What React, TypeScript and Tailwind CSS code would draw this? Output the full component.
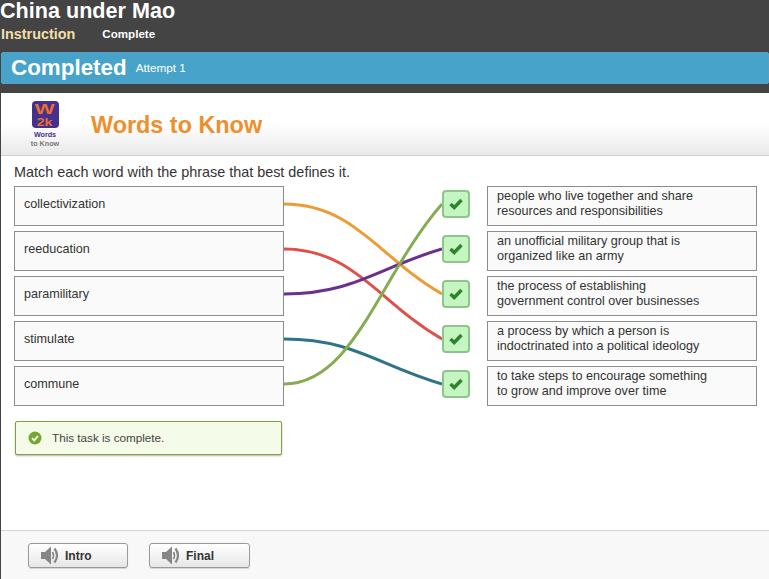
import React from "react";

const leftWords = ["collectivization", "reeducation", "paramilitary", "stimulate", "commune"];

const rightPhrases = [
  ["people who live together and share", "resources and responsibilities"],
  ["an unofficial military group that is", "organized like an army"],
  ["the process of establishing", "government control over businesses"],
  ["a process by which a person is", "indoctrinated into a political ideology"],
  ["to take steps to encourage something", "to grow and improve over time"],
];

// from/to are row indexes, left column to right column
const links = [
  { from: 0, to: 2, color: "#ee9a35" },
  { from: 1, to: 3, color: "#e0504a" },
  { from: 2, to: 1, color: "#6b2f91" },
  { from: 3, to: 4, color: "#2e7488" },
  { from: 4, to: 0, color: "#84ad52" },
];

const rowY = (i: number) => 18 + i * 45;

// flat where it leaves the word, still sloped where it reaches the check box
const linkPath = (from: number, to: number) => {
  const y0 = rowY(from);
  const y1 = rowY(to);
  return `M0 ${y0} C 70 ${y0}, 95 ${y0 + (y1 - y0) * 0.6}, 158 ${y1}`;
};

const Connectors = () => (
  <svg width="158" height="220" viewBox="0 0 158 220" fill="none" className="block shrink-0">
    {links.map((l) => (
      <path key={l.from} d={linkPath(l.from, l.to)} stroke={l.color} strokeWidth="3" />
    ))}
  </svg>
);

const CheckBox = () => (
  <div className="flex h-[28px] w-[28px] items-center justify-center rounded-[4px] border-2 border-[#8dc58d] bg-[#c5f5c0]">
    <svg width="14" height="12" viewBox="0 0 14 12" fill="none">
      <path d="M1.5 6 L5.2 9.5 L12.5 2" stroke="#2b862b" strokeWidth="3.4" />
    </svg>
  </div>
);

const Speaker = () => (
  <svg width="19" height="19" viewBox="0 0 19 19" fill="none">
    <path d="M0 6 H4 L10 0.5 V18.5 L4 13 H0 Z" fill="#858585" />
    <path d="M11.5 6 Q13.5 9.5 11.5 13" stroke="#858585" strokeWidth="1.6" />
    <path d="M13.5 2.5 Q18.5 9.5 13.5 16.5" stroke="#858585" strokeWidth="2.2" />
  </svg>
);

const AudioButton = ({ label, width }: { label: string; width: string }) => (
  <button
    className={`${width} flex h-[25px] items-center gap-[5px] rounded-[3px] border border-[#9a9a9a] bg-gradient-to-b from-white to-[#e6e6e6] pl-[12px] text-[12px] font-bold text-[#333] shadow-[0_1px_1px_rgba(0,0,0,0.15)]`}
  >
    <Speaker />
    {label}
  </button>
);

const App = () => {
  return (
    <div className="flex h-[579px] w-[769px] flex-col overflow-hidden bg-[#444444] font-['Liberation_Sans',Arial,sans-serif]">
      {/* Header */}
      <div className="h-[52px]">
        <h1 className="text-[21.6px] leading-[21px] font-bold text-white">China under Mao</h1>
        <div className="mt-[2px] flex items-center">
          <span className="pl-[1px] text-[14.4px] leading-[22px] font-bold text-[#f3dfa8]">Instruction</span>
          <span className="ml-[27px] text-[11.6px] leading-[22px] font-bold text-white">Complete</span>
        </div>
      </div>

      {/* Status bar */}
      <div className="ml-[1px] flex h-[32px] items-center rounded-[2px] border border-[#5a9fbf] bg-[#47a3c9] pl-[9px] text-white">
        <span className="-mt-[1px] text-[22.4px] font-bold">Completed</span>
        <span className="ml-[9px] -mt-[1px] text-[11.7px]">Attempt 1</span>
      </div>

      {/* Panel */}
      <div className="mt-[9px] ml-[1px] flex flex-1 flex-col bg-white">
        <div className="flex h-[63px] items-center border-b border-[#cfcfcf] bg-gradient-to-b from-white from-50% to-[#e9e9e9]">
          <div className="ml-[27px] flex w-[34px] flex-col items-center">
            <div className="flex h-[27px] w-[27px] flex-col items-center justify-center rounded-[4px] bg-[#45308f] font-bold text-[#e8702a]">
              <span className="scale-x-[1.5] text-[14px] leading-[16px]">W</span>
              <span className="scale-x-[1.4] text-[10px] leading-[11px]">2k</span>
            </div>
            <span className="mt-[2px] text-[7.2px] leading-[9px] font-bold text-[#45308f]">Words</span>
            <span className="text-[7.2px] leading-[9px] font-bold whitespace-nowrap text-[#777]">to Know</span>
          </div>
          <h2 className="mt-[3px] ml-[29px] text-[23.4px] font-bold text-[#ee8f2e]">Words to Know</h2>
        </div>

        <div className="flex-1 pt-[7px] pl-[13px]">
          <p className="text-[14.4px] leading-[18px] text-[#333]">Match each word with the phrase that best defines it.</p>

          <div className="mt-[5px] flex">
            <div className="flex w-[270px] flex-col gap-[5px]">
              {leftWords.map((word) => (
                <div
                  key={word}
                  className="h-[40px] border border-[#8c8c8c] bg-[#fafafa] pt-[10px] pl-[9px] text-[12.6px] leading-[15px] text-[#333]"
                >
                  {word}
                </div>
              ))}
              <div className="mt-[10px] ml-[1px] flex h-[34px] w-[267px] items-center rounded-[2px] border border-[#7fa13f] bg-[#f4fbe8] pl-[12px] text-[11.7px] text-[#444] shadow-[0_1px_2px_rgba(0,0,0,0.3)]">
                <svg width="14" height="14" viewBox="0 0 14 14" fill="none">
                  <circle cx="7" cy="7" r="6.5" fill="#76a82f" />
                  <path d="M4 7.2 L6.2 9.4 L10 5" stroke="white" strokeWidth="1.8" />
                </svg>
                <span className="ml-[10px]">This task is complete.</span>
              </div>
            </div>

            <Connectors />

            <div className="flex w-[28px] flex-col gap-[17px] pt-[4px]">
              {leftWords.map((word) => (
                <CheckBox key={word} />
              ))}
            </div>

            <div className="ml-[17px] flex w-[270px] flex-col gap-[5px]">
              {rightPhrases.map((lines) => (
                <div
                  key={lines[0]}
                  className="h-[40px] border border-[#8c8c8c] bg-[#fafafa] pt-[2px] pl-[9px] text-[12.6px] leading-[15px] text-[#333]"
                >
                  {lines[0]}
                  <br />
                  {lines[1]}
                </div>
              ))}
            </div>
          </div>
        </div>

        {/* Footer */}
        <div className="flex h-[49px] gap-[21px] border-t border-[#d4d4d4] bg-[#f8f8f8] pt-[12px] pl-[27px]">
          <AudioButton label="Intro" width="w-[100px]" />
          <AudioButton label="Final" width="w-[101px]" />
        </div>
      </div>
    </div>
  );
};

export default App;
